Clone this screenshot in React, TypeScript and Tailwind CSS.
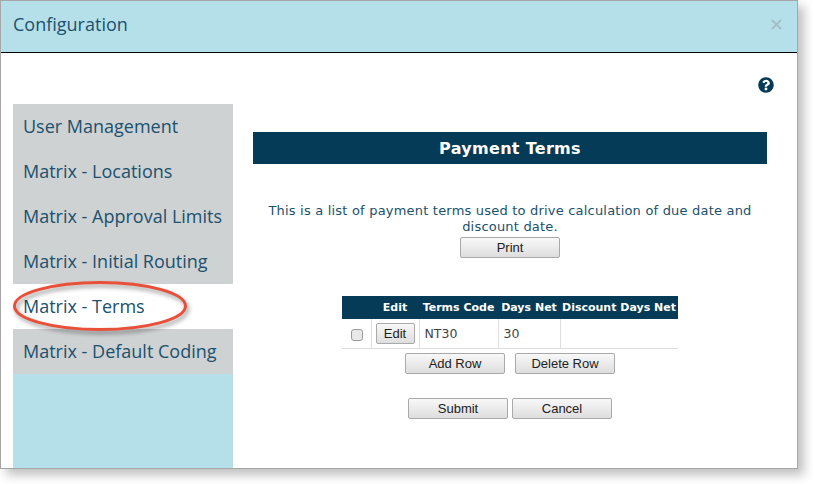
import { FaQuestionCircle } from "react-icons/fa"

const menu = [
  "User Management",
  "Matrix - Locations",
  "Matrix - Approval Limits",
  "Matrix - Initial Routing",
  "Matrix - Terms",
  "Matrix - Default Coding",
]

function Btn({ label, className = "" }: { label: string; className?: string }) {
  return (
    <button
      className={
        "h-[21px] w-[100px] rounded-[2px] border border-[#a9a9a9] bg-gradient-to-b from-[#f8f8f8] to-[#dedede] font-['Liberation_Sans',sans-serif] text-[13px] leading-[19px] text-[#222] " +
        className
      }
    >
      {label}
    </button>
  )
}

export default function App() {
  return (
    <div className="relative h-[484px] w-[813px] overflow-hidden bg-white font-['Open_Sans',sans-serif]">
      <div className="flex h-[469px] w-[798px] flex-col border border-[#a6a6a6] bg-white shadow-[6px_6px_10px_rgba(0,0,0,0.25)]">
        <div className="flex h-[52px] shrink-0 items-center justify-between border-b border-black bg-[#b5e0e9] pb-[4px] pl-[12px] pr-[15px]">
          <span className="text-[18px] text-[#20506e]">Configuration</span>
          <svg width="11" height="11" viewBox="0 0 11 11">
            <path d="M1 1 L10 10 M10 1 L1 10" stroke="#a3c0c8" strokeWidth="2" />
          </svg>
        </div>

        <div className="flex min-h-0 flex-1 pl-[12px]">
          <div className="mt-[51px] flex w-[220px] shrink-0 flex-col bg-[#b5e0e9]">
            {menu.map((m) => (
              <div
                key={m}
                className={
                  "h-[45px] shrink-0 pl-[10px] pt-[9px] text-[18px] leading-[27px] text-[#20506e] " +
                  (m === "Matrix - Terms" ? "bg-white" : "bg-[#ced2d3]")
                }
              >
                {m}
              </div>
            ))}
          </div>

          <div className="ml-[20px] flex w-[514px] shrink-0 flex-col items-center font-['DejaVu_Sans',sans-serif]">
            <div className="mt-[24px] flex w-full justify-end">
              <FaQuestionCircle className="mr-[-7px] text-[16px] text-[#053b57]" />
            </div>
            <div className="mt-[39px] flex h-[32px] w-full items-center justify-center bg-[#053b57] pt-[2px] text-[16px] font-bold tracking-[0.3px] text-white">
              Payment Terms
            </div>
            <p className="mt-[39px] w-[490px] text-center text-[13px] leading-[16px] tracking-[0.2px] text-[#20506e]">
              This is a list of payment terms used to drive calculation of due date and discount date.
            </p>
            <Btn label="Print" className="mt-[2px] shrink-0" />

            <table className="mt-[38px] w-[336px] table-fixed border-collapse text-[#444]">
              <thead>
                <tr className="h-[23px] bg-[#053b57] text-[11px] font-bold text-white">
                  <th className="w-[29px]"></th>
                  <th className="w-[48px] pt-[2px] text-center">Edit</th>
                  <th className="w-[79px] pt-[2px] text-center">Terms Code</th>
                  <th className="w-[62px] pt-[2px] text-center">Days Net</th>
                  <th className="pt-[2px] text-center">Discount Days Net</th>
                </tr>
              </thead>
              <tbody>
                <tr className="h-[29px] border-b border-[#dedede] text-[12.5px]">
                  <td className="border-r border-[#dedede] pl-[9px]">
                    <span className="mt-[3px] block h-[12px] w-[12px] rounded-[3px] border border-[#9a9a9a] bg-[#e8e8e8]"></span>
                  </td>
                  <td className="border-r border-[#dedede] text-center">
                    <button className="h-[21px] w-[39px] rounded-[2px] border border-[#a9a9a9] bg-gradient-to-b from-[#f8f8f8] to-[#dedede] font-['Liberation_Sans',sans-serif] text-[13px] leading-[19px] text-[#222]">
                      Edit
                    </button>
                  </td>
                  <td className="border-r border-[#dedede] pl-[5px] pt-[2px]">NT30</td>
                  <td className="border-r border-[#dedede] pl-[5px] pt-[2px]">30</td>
                  <td></td>
                </tr>
              </tbody>
            </table>

            <div className="mt-[4px] flex gap-[10px]">
              <Btn label="Add Row" />
              <Btn label="Delete Row" />
            </div>
            <div className="mt-[24px] flex gap-[4px]">
              <Btn label="Submit" />
              <Btn label="Cancel" />
            </div>
          </div>
        </div>
      </div>

      {/* hand drawn callout round the active item */}
      <svg
        className="absolute left-[6px] top-[274px] drop-shadow-[2px_3px_2px_rgba(0,0,0,0.4)]"
        width="192"
        height="64"
        viewBox="0 0 192 64"
        fill="none"
      >
        <ellipse cx="94" cy="32" rx="85.5" ry="23.5" stroke="#e8503a" strokeWidth="3" />
      </svg>
    </div>
  )
}
